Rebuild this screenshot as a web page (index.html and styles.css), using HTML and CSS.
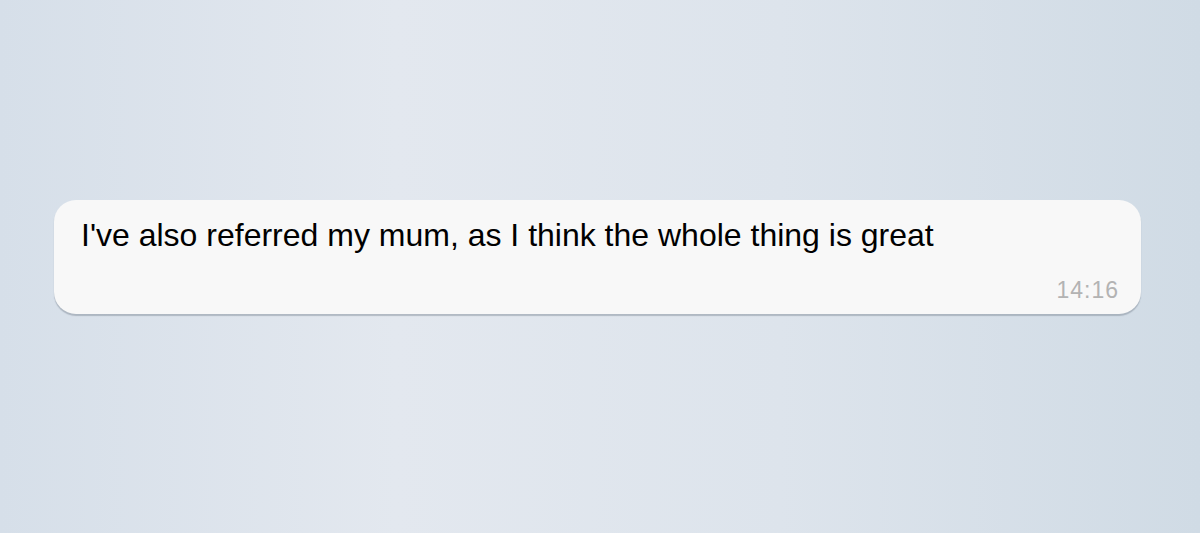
FILE: index.html
```html
<!DOCTYPE html>
<html>
<head>
<meta charset="utf-8">
<link rel="stylesheet" href="styles.css">
</head>
<body>
<main class="chat">
  <div class="bubble">
    <p class="text">I've also referred my mum, as I think the whole thing is great</p>
    <div class="meta"><span class="time">14:16</span></div>
  </div>
</main>
</body>
</html>
```
FILE: styles.css
```css
html, body {
  margin: 0;
  padding: 0;
  height: 100%;
}
body {
  background: linear-gradient(90deg, #d6dfe9 0%, #e3e8ef 33%, #dde4ec 65%, #d0dbe5 100%);
  font-family: "Liberation Sans", Arial, sans-serif;
}
.chat {
  padding: 200px 59px 0 54px;
}
.bubble {
  background: #f8f8f8;
  border-radius: 22px;
  box-shadow: 0 2px 1px rgba(120, 130, 145, 0.45);
  padding: 17px 22px 11px 27px;
}
.text {
  margin: 0;
  font-size: 32px;
  line-height: 36px;
  color: #000;
}
.meta {
  display: flex;
  justify-content: flex-end;
  margin-top: 24px;
}
.time {
  font-size: 23px;
  line-height: 26px;
  letter-spacing: 1px;
  color: #b3b3b3;
}
```
